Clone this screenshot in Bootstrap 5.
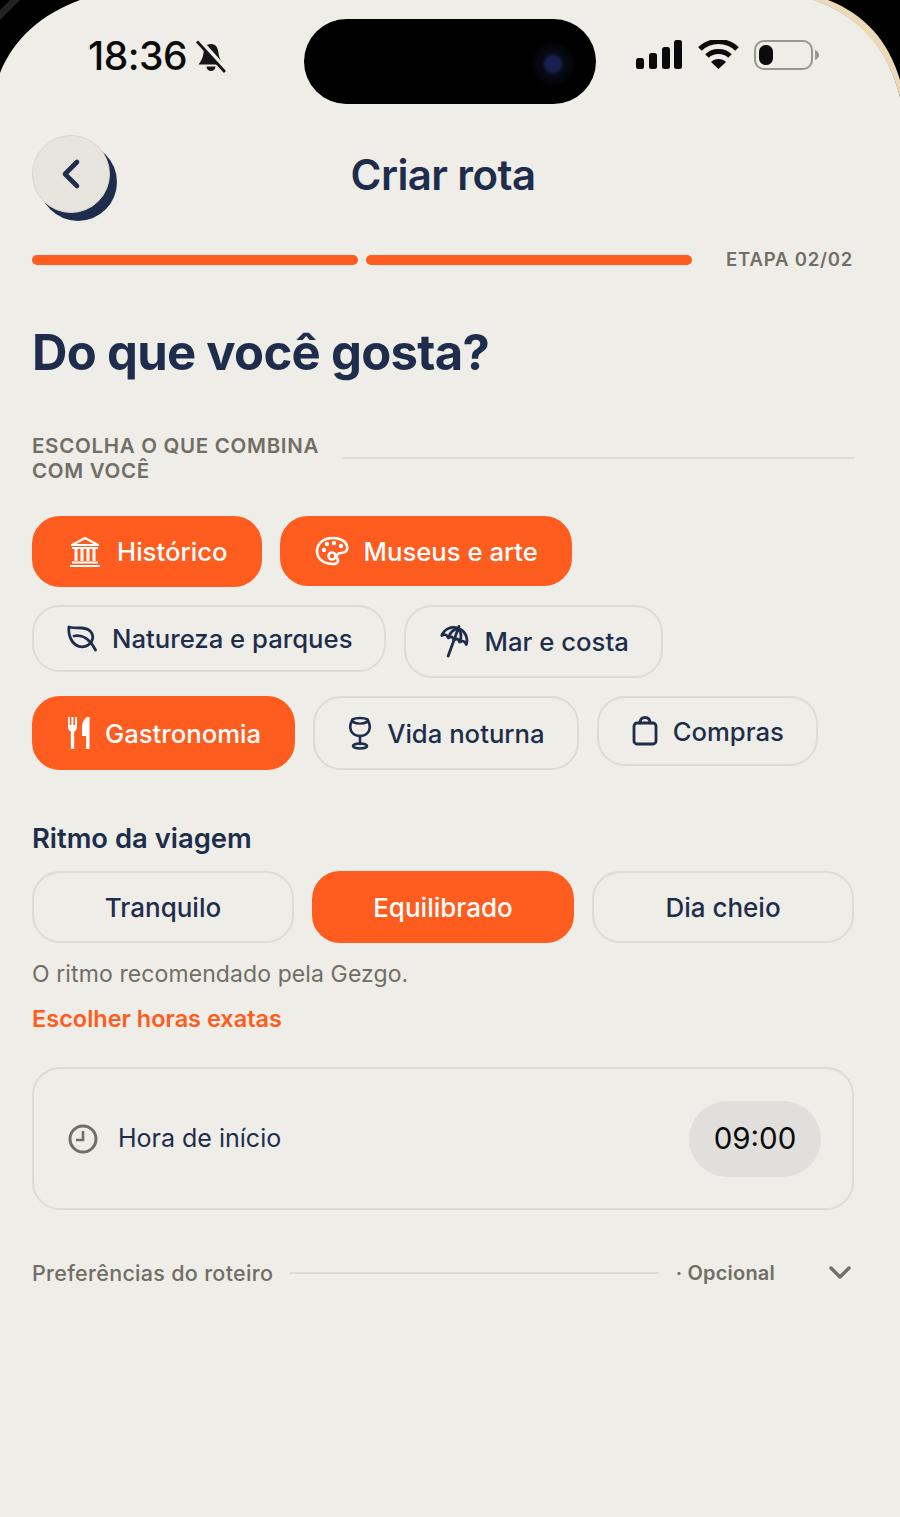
<!DOCTYPE html>
<html lang="pt-BR">
<head>
    <meta charset="UTF-8">
    <title>Criar rota</title>
    <link href="https://cdn.jsdelivr.net/npm/bootstrap@5.3.0/dist/css/bootstrap.min.css" rel="stylesheet">
    <style>
        :root { --navy: #1f2d4d; --laranja: #ff5c20; --cinza: #6f6f66; --fundo: #eeede7; --borda: #dcdbd6; }
        html, body { height: 100%; }
        body { background: var(--fundo); font-family: Inter, "Liberation Sans", sans-serif; color: var(--navy); overflow: hidden; }
        .tela { position: relative; width: 900px; height: 1517px; padding: 0 46px 0 32px; }
        .canto { position: absolute; top: 0; }
        .canto-esq { left: 0; }
        .canto-dir { right: 0; }
        .status-barra { height: 104px; padding-top: 19px; margin-right: -46px; margin-left: -32px; }
        .status-esq { width: 304px; padding: 14px 0 0 88px; gap: 9px; height: 60px; }
        .hora { font-size: 39px; line-height: 40px; font-weight: 500; color: #0b0b0b; letter-spacing: -.5px; }
        .ilha { width: 292px; height: 85px; border-radius: 43px; background: #000; flex-shrink: 0; position: relative; }
        .camera { position: absolute; left: 228px; top: 24px; width: 42px; height: 42px; border-radius: 50%; background: radial-gradient(circle, #18214f 0 24%, #0a0a16 38%, #040406 70%, #000 100%); }
        .status-dir { padding: 21px 0 0 40px; gap: 15px; }
        .topo { display: grid; grid-template-columns: 1fr auto 1fr; align-items: center; margin-top: 31px; }
        .btn-voltar { width: 78px; height: 78px; border-radius: 50%; background: #e6e4dd; border: 1px solid #d6d5cf; box-shadow: 7px 8px 0 var(--navy); padding: 0; }
        .titulo { font-size: 42px; line-height: 50px; font-weight: 600; letter-spacing: -.6px; margin: 2px 0 0; }
        .progresso { margin-top: 35px; height: 24px; }
        .barra { width: 326px; height: 10px; border-radius: 5px; background: var(--laranja); flex-shrink: 0; }
        .etapa { margin-left: 26px; font-size: 18.500px; font-weight: 600; color: var(--cinza); letter-spacing: .8px; white-space: nowrap; }
        .pergunta { font-size: 49px; line-height: 60px; font-weight: 700; letter-spacing: -.7px; margin: 51px 0 0; }
        .rotulo { margin-top: 50px; }
        .rotulo-txt { width: 310px; flex-shrink: 0; font-size: 20.500px; line-height: 25px; font-weight: 600; color: var(--cinza); letter-spacing: .7px; }
        .linha { flex: 1; height: 2px; background: var(--borda); }
        .chips { margin-top: 33px; gap: 18px; }
        .chip-linha { gap: 18px; }
        .chip { border: 2px solid var(--borda); border-radius: 28px; padding: 18px 32px 18px 33px; gap: 15px; font-size: 25.700px; line-height: 27px; font-weight: 500; color: var(--navy); background: transparent; }
        .chip.ativo { background: var(--laranja); border-color: var(--laranja); color: #fff; }
        .chip svg { flex-shrink: 0; }
        .ritmo-titulo { font-size: 27.400px; line-height: 34px; font-weight: 600; margin: 51px 0 0; }
        .ritmo { display: grid; grid-template-columns: repeat(3, 1fr); gap: 18px; margin-top: 16px; }
        .ritmo-btn { height: 72px; border: 2px solid var(--borda); border-radius: 28px; font-size: 26px; font-weight: 500; color: var(--navy); background: transparent; }
        .ritmo-btn.ativo { background: var(--laranja); border-color: var(--laranja); color: #fff; }
        .ajuda { font-size: 23px; line-height: 30px; color: var(--cinza); margin: 16px 0 0; letter-spacing: .1px; }
        .link-horas { display: block; font-size: 23.500px; line-height: 30px; font-weight: 600; color: var(--laranja); text-decoration: none; margin-top: 15px; }
        .hora-card { margin-top: 33px; height: 143px; border: 2px solid var(--borda); border-radius: 28px; padding: 0 31px 0 34px; }
        .hora-rotulo { gap: 20px; font-size: 25px; }
        .hora-pilula { width: 132px; height: 76px; border-radius: 38px; background: #e0dfdb; font-size: 29.500px; color: #0b0b0b; }
        .prefs { margin-top: 48px; height: 30px; gap: 17px; font-size: 21.500px; font-weight: 500; color: var(--cinza); letter-spacing: .3px; }
        .opcional { font-size: 20px; font-weight: 600; white-space: nowrap; margin-right: 79px; letter-spacing: .2px; }
        .prefs svg { position: absolute; right: 49px; }
    </style>
</head>

<body>
<div class="tela">
    <svg class="canto canto-esq" width="82" height="74" viewBox="0 0 82 74"><path d="M0 0H80C42 14 14 38 0 73Z" fill="#000"/><path d="M0 20L20 0H10L0 10Z" fill="#3a3a3a" opacity=".6"/></svg>
    <svg class="canto canto-dir" width="90" height="98" viewBox="0 0 90 98"><path d="M4 0H90V97C78 48 50 16 4 0Z" fill="#000"/><path d="M3 0H18C54 14 78 40 90 80V97C78 50 50 16 3 0Z" fill="#ecd9ba"/></svg>

    <div class="status-barra d-flex">
        <div class="status-esq d-flex align-items-center">
            <span class="hora">18:36</span>
            <svg width="30" height="33" viewBox="0 0 30 33"><path d="M15 4C9.500 4 8 8.500 7.500 13C7 18 5 21 2.500 24.500H27.500C25 21 23 18 22.500 13C22 8.500 20.500 4 15 4Z" fill="#161616"/><path d="M10.500 26.500a4.500 4.500 0 0 0 9 0Z" fill="#161616"/><path d="M3 0L30 30" stroke="#eeede7" stroke-width="5"/><path d="M1 1.500L29 32" stroke="#161616" stroke-width="2.800"/></svg>
        </div>
        <div class="ilha"><span class="camera"></span></div>
        <div class="status-dir d-flex align-items-start">
            <svg width="47" height="30" viewBox="0 0 47 30" fill="#0b0b0b"><rect y="18" width="8" height="11" rx="2.500"/><rect x="13" y="13" width="8" height="16" rx="2.500"/><rect x="26" y="7" width="8" height="22" rx="2.500"/><rect x="38" y="0" width="8" height="29" rx="2.500"/></svg>
            <svg width="41" height="30" viewBox="0 0 41 30"><path d="M2 9C12 -1 29 -1 39 9M9 16C15 10 26 10 32 16" fill="none" stroke="#0b0b0b" stroke-width="5"/><path d="M13 22C17 18 24 18 28 22L20.500 29Z" fill="#0b0b0b"/></svg>
            <svg width="66" height="31" viewBox="0 0 66 31"><rect x="1" y="1" width="57" height="28" rx="9" fill="none" stroke="#97968f" stroke-width="2"/><rect x="5" y="5" width="14" height="20" rx="6.500" fill="#0b0b0b"/><path d="M61 10C64 11 65 13 65 15C65 17 64 19 61 20Z" fill="#97968f"/></svg>
        </div>
    </div>

    <div class="topo">
        <div>
            <button class="btn-voltar d-flex align-items-center justify-content-center" aria-label="Voltar">
                <svg width="22" height="32" viewBox="0 0 22 32" fill="none"><path d="M17 4L5 16L17 28" stroke="#1f2d4d" stroke-width="4.600" stroke-linecap="round" stroke-linejoin="round"/></svg>
            </button>
        </div>
        <h1 class="titulo">Criar rota</h1>
        <div></div>
    </div>

    <div class="progresso d-flex align-items-center gap-2">
        <div class="barra"></div>
        <div class="barra"></div>
        <span class="etapa">ETAPA 02/02</span>
    </div>

    <h2 class="pergunta">Do que você gosta?</h2>

    <div class="rotulo d-flex align-items-center">
        <div class="rotulo-txt">ESCOLHA O QUE COMBINA COM VOCÊ</div>
        <div class="linha"></div>
    </div>

    <div class="chips d-flex flex-column">
        <div class="chip-linha d-flex align-items-start">
            <button class="chip ativo d-flex align-items-center">
                <svg width="35" height="31" viewBox="-2 0 35 31" fill="none" stroke="#fff" stroke-width="2.200"><path d="M16 2L3 9H29Z" stroke-linejoin="round"/><path d="M3 12H29M3 26.500H29M1 30H31"/><path d="M7 13V25M13 13V25M19 13V25M25 13V25" stroke-width="3"/></svg>
                Histórico
            </button>
            <button class="chip ativo d-flex align-items-center">
                <svg width="34" height="30" viewBox="0 0 34 30" fill="none" stroke="#fff" stroke-width="2.600"><path d="M18 2C8 2 2 8 2 15C2 23 9 28 18 28C23 28 24 25 22 22C21 19 23 17 26 17C31 17 33 14 32 10C31 5 25 2 18 2Z"/><circle cx="17" cy="20" r="3.500"/><g fill="#fff" stroke="none"><circle cx="9" cy="14" r="2.200"/><circle cx="12" cy="8" r="2.200"/><circle cx="19" cy="7" r="2.200"/><circle cx="26" cy="10" r="2.200"/></g></svg>
                Museus e arte
            </button>
        </div>
        <div class="chip-linha d-flex align-items-start">
            <button class="chip d-flex align-items-center">
                <svg width="30" height="27" viewBox="0 0 30 27" fill="none" stroke="#1f2d4d" stroke-width="2.800" stroke-linecap="round" stroke-linejoin="round"><path d="M2 2C5 3 9 3 14 3C22 3 27 8 25.500 14C24 21 15 24 9 20C4 17 1 9 2 2Z"/><path d="M7 11C15 9 23 14 28.500 25"/></svg>
                Natureza e parques
            </button>
            <button class="chip d-flex align-items-center">
                <svg width="30" height="33" viewBox="0 0 30 33" fill="none" stroke="#1f2d4d" stroke-width="2.800" stroke-linecap="round" stroke-linejoin="round"><g transform="rotate(20 15 15)"><path d="M2 15A13 12.500 0 0 1 28 15Q24 11 21 15Q18 11 15 15Q12 11 9 15Q5 11 2 15Z"/><path d="M15 0.500V32M9 14C9 8 11 5 15 3C19 5 21 8 21 14"/></g></svg>
                Mar e costa
            </button>
        </div>
        <div class="chip-linha d-flex align-items-start">
            <button class="chip ativo d-flex align-items-center">
                <svg width="23" height="34" viewBox="-1 0 23 34" fill="#fff"><path d="M0 1H1.800V9H3.400V1H5.400V9H7V1H9V11C9 13.500 7.500 15 6.200 15.500V33H2.800V15.500C1.500 15 0 13.500 0 11Z"/><path d="M19 1H21.500V33H18V20H14V12C14 7 16 3 19 1Z"/></svg>
                Gastronomia
            </button>
            <button class="chip d-flex align-items-center">
                <svg width="24" height="34" viewBox="0 0 24 34" fill="none" stroke="#1f2d4d" stroke-width="2.600" stroke-linecap="round" stroke-linejoin="round"><path d="M4.500 3.500C8 1.500 16 1.500 19.500 3.500C22 8 23 13 19.500 17C16 21 8 21 4.500 17C1 13 2 8 4.500 3.500Z"/><path d="M5 6C9 8 15 8 19 6"/><path d="M12 20V28"/><ellipse cx="12" cy="30" rx="7" ry="2.500"/></svg>
                Vida noturna
            </button>
            <button class="chip d-flex align-items-center">
                <svg width="26" height="30" viewBox="0 0 26 30" fill="none" stroke="#1f2d4d" stroke-width="2.800" stroke-linecap="round" stroke-linejoin="round"><rect x="2" y="7" width="22" height="21" rx="3"/><path d="M8 7C8 3 10 1.500 13 1.500C16 1.500 18 3 18 7"/></svg>
                Compras
            </button>
        </div>
    </div>

    <h3 class="ritmo-titulo">Ritmo da viagem</h3>
    <div class="ritmo">
        <button class="ritmo-btn">Tranquilo</button>
        <button class="ritmo-btn ativo">Equilibrado</button>
        <button class="ritmo-btn">Dia cheio</button>
    </div>
    <p class="ajuda">O ritmo recomendado pela Gezgo.</p>
    <a href="#" class="link-horas">Escolher horas exatas</a>

    <div class="hora-card d-flex align-items-center justify-content-between">
        <div class="hora-rotulo d-flex align-items-center">
            <svg width="30" height="30" viewBox="0 0 30 30" fill="none" stroke="#6f6f66" stroke-width="3"><circle cx="15" cy="15" r="13"/><path d="M15 7V16H8" stroke-width="2.600"/></svg>
            Hora de início
        </div>
        <div class="hora-pilula d-flex align-items-center justify-content-center">09:00</div>
    </div>

    <div class="prefs d-flex align-items-center">
        <span class="text-nowrap">Preferências do roteiro</span>
        <div class="linha"></div>
        <span class="opcional">· Opcional</span>
        <svg width="22" height="14" viewBox="0 0 22 14" fill="none"><path d="M2 2L11 11L20 2" stroke="#6f6f66" stroke-width="3.400" stroke-linecap="round" stroke-linejoin="round"/></svg>
    </div>
</div>

<script src="https://cdn.jsdelivr.net/npm/bootstrap@5.3.0/dist/js/bootstrap.bundle.min.js"></script>
</body>
</html>
